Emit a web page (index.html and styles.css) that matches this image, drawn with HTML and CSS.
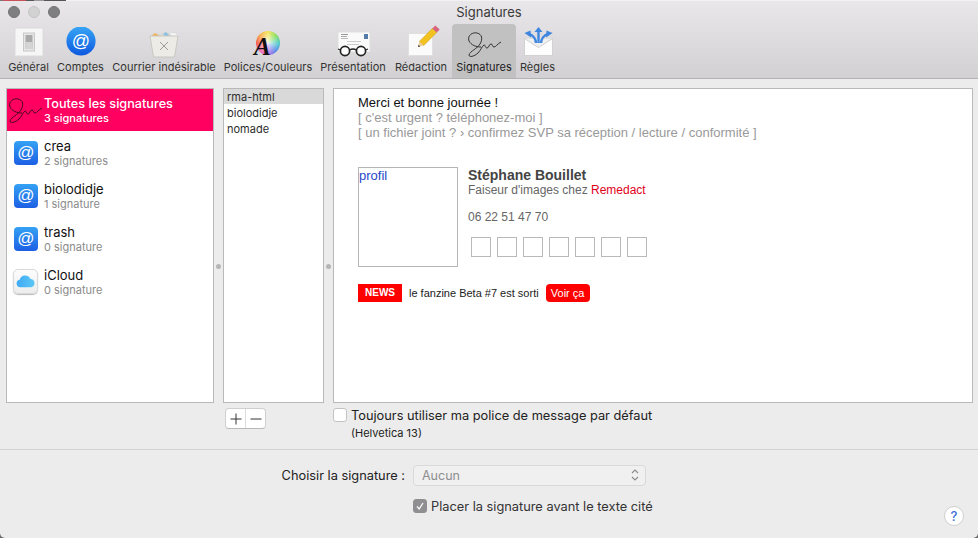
FILE: index.html
```html
<!DOCTYPE html>
<html lang="fr">
<head>
<meta charset="utf-8">
<title>Signatures</title>
<link rel="stylesheet" href="styles.css">
</head>
<body>
<div class="window">
  <header class="chrome">
    <i class="behind"></i>
    <div class="titlebar">
      <div class="lights"><i class="light"></i><i class="light light-off"></i><i class="light"></i></div>
      <div class="title">Signatures</div>
    </div>
    <nav class="tabs">
      <div class="tab">
        <svg class="ticon" viewBox="0 0 36 34"><rect x="4" y="1" width="28" height="28" fill="#f6f6f6" stroke="#dcdcdc"/><rect x="12.500" y="6" width="11" height="18" fill="#e6e6e6" stroke="#c8c8c8"/><rect x="14.500" y="8" width="7" height="14" fill="#a9a9a9"/><rect x="14.500" y="15" width="7" height="7" fill="#d4d4d4"/></svg>
        <span>Général</span>
      </div>
      <div class="tab">
        <svg class="ticon" viewBox="0 0 36 34"><defs><linearGradient id="gb" x1="0" y1="0" x2="0" y2="1"><stop offset="0" stop-color="#37a6f5"/><stop offset="1" stop-color="#0e58e0"/></linearGradient></defs><circle cx="18" cy="14" r="14.600" fill="url(#gb)"/><text x="18" y="20" class="at" font-size="18">@</text></svg>
        <span>Comptes</span>
      </div>
      <div class="tab">
        <svg class="ticon" viewBox="0 0 36 34"><path d="M5 9l4-3 5 1 5-2 5 1 5-1 3 4-4 3H8z" fill="#d9d9d9"/><path d="M5 9l4-3 5 3z" fill="#f0b45a"/><path d="M17 7l3-2 3 3-3 2z" fill="#8cc0e0"/><path d="M24 6l5 0 3 3-6 1z" fill="#f4f4f4"/><path d="M4 9h28l-3.500 21h-21z" fill="#ecebe6" stroke="#c9c8c2"/><path d="M14 15l8 8m0-8l-8 8" stroke="#9b9b9b" stroke-width="1" fill="none"/></svg>
        <span>Courrier indésirable</span>
      </div>
      <div class="tab">
        <div class="ticon wheelbox"><div class="wheel"></div><span class="wheel-a">A</span></div>
        <span>Polices/Couleurs</span>
      </div>
      <div class="tab">
        <svg class="ticon" viewBox="0 0 36 34"><rect x="3" y="5" width="32" height="20" fill="#fafafa" stroke="#dedede"/><rect x="6" y="7" width="7" height="1" fill="#999"/><rect x="6" y="9" width="6" height="1" fill="#aaa"/><rect x="6" y="11" width="7" height="1" fill="#bbb"/><rect x="29" y="7" width="4" height="5" fill="#557ca8"/><rect x="12" y="14" width="14" height="1" fill="#ccc"/><rect x="12" y="17" width="12" height="1" fill="#ccc"/><circle cx="10" cy="24" r="4.600" fill="#fff" stroke="#222" stroke-width="1.700"/><circle cx="26" cy="24" r="4.600" fill="#fff" stroke="#222" stroke-width="1.700"/><path d="M14.500 23q3.500-2 7 0M5.500 23l-2.500-1M30.500 23l2.500-1" stroke="#222" stroke-width="1.300" fill="none"/></svg>
        <span>Présentation</span>
      </div>
      <div class="tab">
        <svg class="ticon ticon-free" viewBox="0 0 36 34"><rect x="5.500" y="6.500" width="24" height="22" fill="#fbfbfb" stroke="#e0e0e0"/><path d="M16.300 14.400L29.300 1.400 33.700 5.600 20.700 18.600z" fill="#f2c21e" stroke="#c89512" stroke-width=".5"/><path d="M15 20l1.300-5.600 4.400 4.200z" fill="#efcfa0"/><path d="M15 20l.5-2.200 1.700 1.600z" fill="#333"/><path d="M29.300 1.400L32.300-1.600 36.700 2.600 33.700 5.600z" fill="#d8657e"/></svg>
        <span>Rédaction</span>
      </div>
      <div class="tab tab-active">
        <svg class="ticon" viewBox="0 0 36 34"><path d="M3 14C1 8 7 5 11 6 16 7 17 12 14 17 11 22 4 24 3 28 3 31 9 29 12 26 15 23 16 19 18 18 19 17 19 21 21 21 23 21 23 17 25 17 27 17 26 20 28 20 30 20 31 17 35 15M3 14C5 18 10 20 15 20" fill="none" stroke="#333" stroke-width="1"/></svg>
        <span>Signatures</span>
      </div>
      <div class="tab">
        <svg class="ticon" viewBox="0 0 36 34"><rect x="4.500" y="11.500" width="28" height="17" fill="#fdfdfd" stroke="#d2d2d2"/><path d="M4.500 11.500l14 9 14-9" fill="#f0f0f0" stroke="#cfcfcf"/><path d="M18.500 16V4M16 16c0-4-3-8-7-9M21 16c0-4 3-8 7-9" fill="none" stroke="#3f86e0" stroke-width="2.400"/><path d="M18.500 0l4 5h-8zM4.500 6l6-2.500 .5 7zM32.500 6l-6-2.500-.5 7z" fill="#3f86e0"/></svg>
        <span>Règles</span>
      </div>
    </nav>
  </header>

  <main class="body">
    <section class="panes">
      <div class="pane accounts">
        <div class="account account-sel">
          <svg class="sig-icon" viewBox="0 0 36 34"><path d="M3 14C1 8 7 5 11 6 16 7 17 12 14 17 11 22 4 24 3 28 3 31 9 29 12 26 15 23 16 19 18 18 19 17 19 21 21 21 23 21 23 17 25 17 27 17 26 20 28 20 30 20 31 17 35 15M3 14C5 18 10 20 15 20" fill="none" stroke="#4a0820" stroke-width="1"/></svg>
          <div class="acc-text"><div class="acc-name sel-name">Toutes les signatures</div><div class="acc-sub sel-sub">3 signatures</div></div>
        </div>
        <div class="account">
          <div class="mail-icon">@</div>
          <div class="acc-text"><div class="acc-name">crea</div><div class="acc-sub">2 signatures</div></div>
        </div>
        <div class="account">
          <div class="mail-icon">@</div>
          <div class="acc-text"><div class="acc-name">biolodidje</div><div class="acc-sub">1 signature</div></div>
        </div>
        <div class="account">
          <div class="mail-icon">@</div>
          <div class="acc-text"><div class="acc-name">trash</div><div class="acc-sub">0 signature</div></div>
        </div>
        <div class="account">
          <div class="cloud-icon"><svg viewBox="0 0 24 24" class="cloud"><defs><linearGradient id="gc" x1="0" y1="0" x2="1" y2="0"><stop offset="0" stop-color="#3fa9f5"/><stop offset="1" stop-color="#5cc8f5"/></linearGradient></defs><path d="M6.500 18a4 4 0 0 1-.6-7.900 6 6 0 0 1 11.300-.6 4.300 4.300 0 0 1 .8 8.500z" fill="url(#gc)"/></svg></div>
          <div class="acc-text"><div class="acc-name">iCloud</div><div class="acc-sub">0 signature</div></div>
        </div>
      </div>
      <div class="split"><i class="dot"></i></div>
      <div class="list-col">
        <div class="pane siglist">
          <div class="sigrow sigrow-sel">rma-html</div>
          <div class="sigrow">biolodidje</div>
          <div class="sigrow">nomade</div>
        </div>
        <div class="plusminus"><span class="pm">
          <svg viewBox="0 0 12 12" class="pm-icon"><path d="M6 .5v11M.5 6h11" stroke="#333" stroke-width="1" fill="none"/></svg></span><span class="pm pm-last"><svg viewBox="0 0 12 12" class="pm-icon"><path d="M.5 6h11" stroke="#333" stroke-width="1" fill="none"/></svg></span></div>
      </div>
      <div class="split"><i class="dot"></i></div>
      <div class="edit-col">
        <div class="pane editor">
          <p class="line line-black">Merci et bonne journée !</p>
          <p class="line line-grey">[ c'est urgent ? téléphonez-moi ]</p>
          <p class="line line-grey">[ un fichier joint ? › confirmez SVP sa réception / lecture / conformité ]</p>
          <div class="card">
            <div class="photo">profil</div>
            <div class="who">
              <div class="who-name">Stéphane Bouillet</div>
              <div class="who-job">Faiseur d'images chez <span class="red">Remedact</span></div>
              <div class="who-tel">06 22 51 47 70</div>
              <div class="socials"><i></i><i></i><i></i><i></i><i></i><i></i><i></i></div>
            </div>
          </div>
          <div class="news"><span class="news-tag">NEWS</span><span class="news-text">le fanzine Beta #7 est sorti</span><span class="news-btn">Voir ça</span></div>
        </div>
        <div class="font-opt">
          <label class="check-row"><i class="box"></i><span>Toujours utiliser ma police de message par défaut</span></label>
          <div class="font-name">(Helvetica 13)</div>
        </div>
      </div>
    </section>

    <section class="foot">
      <div class="foot-row">
        <div class="foot-label">Choisir la signature :</div>
        <div class="select"><span>Aucun</span>
          <svg viewBox="0 0 8 14" class="updown"><path d="M1 5l3-3 3 3M1 9l3 3 3-3" fill="none" stroke="#8a8a8a" stroke-width="1.100"/></svg>
        </div>
      </div>
      <div class="foot-row foot-row2">
        <div class="foot-label"></div>
        <label class="check-row2"><i class="box box-on"><svg viewBox="0 0 14 14"><path d="M3.500 7.500l2.500 3 4.500-7" fill="none" stroke="#fff" stroke-width="1.500"/></svg></i><span>Placer la signature avant le texte cité</span></label>
      </div>
      <div class="help">?</div>
    </section>
  </main>
</div>
</body>
</html>
```
FILE: styles.css
```css
* { box-sizing: border-box; }
html, body { margin: 0; padding: 0; }
html { background: #6a6a6a; }
body {
  width: 978px; height: 538px; overflow: hidden;
  font-family: "Inter", "Liberation Sans", sans-serif;
  color: #222;
}
.window { width: 978px; height: 538px; display: flex; flex-direction: column; background: #ececec; border-radius: 0 0 5px 5px; }

.chrome {
  height: 79px; flex: none; position: relative;
  background: linear-gradient(#e9e7e9, #d2d0d2);
  border-bottom: 1px solid #b3b3b3;
  border-top: 1px solid #f3f2f3;
}
.behind {
  position: absolute; left: 0; top: -1px; width: 66px; height: 1px;
  background: linear-gradient(90deg, #777 0 3px, #c8505a 3px 26px, #555 26px 34px, #999 34px 44px, #555 44px 66px);
}
.titlebar { height: 22px; display: flex; align-items: center; position: relative; padding-left: 8px; }
.lights { display: flex; gap: 8px; }
.light { width: 12px; height: 12px; border-radius: 50%; background: #7f7e80; border: 1px solid #737274; }
.light-off { background: #d3d2d3; border-color: #c6c5c6; }
.title { position: absolute; left: 0; right: 0; text-align: center; font-size: 13px; color: #3a3a3a; }

.tabs {
  display: grid; height: 55px;
  grid-template-columns: 49px 55px 112px 96px 74px 62px 64px 43px;
  padding-left: 4px;
}
.tab {
  display: flex; flex-direction: column; align-items: center;
  font-size: 11px; letter-spacing: .03px; color: #333; white-space: nowrap;
  border-radius: 4px 4px 0 0;
}
.tab span { line-height: 13px; }
.tab-active { background: #c2c1c2; color: #1c1c1c; margin-top: 1px; }
.ticon { width: 36px; height: 34px; margin-top: 4px; display: block; flex: none; }
.ticon-free { overflow: visible; }
.tab-active .ticon { margin-top: 3px; }
.at { fill: #fff; text-anchor: middle; font-family: "Liberation Sans", sans-serif; }
.wheelbox { position: relative; }
.wheel {
  position: absolute; left: 6px; top: 4px; width: 24px; height: 24px; border-radius: 50%;
  background:
    radial-gradient(circle, rgba(255,255,255,.85) 0, rgba(255,255,255,0) 75%),
    conic-gradient(#f5e14c, #7fdc4a, #3fc7c2, #4a7ee8, #b05ce0, #ff5fa8, #f4503f, #f5a63c, #f5e14c);
}
.tab .wheel-a {
  position: absolute; left: 4px; top: 7px;
  font-family: "Liberation Serif", serif; font-style: italic; font-weight: 700;
  font-size: 25px; line-height: 25px; color: #111;
}

.body { flex: 1; display: flex; flex-direction: column; }
.panes { display: flex; height: 371px; padding: 9px 5px 0 6px; border-bottom: 1px solid #d2d2d2; }
.pane { background: #fff; border: 1px solid #b9b9b9; height: 315px; }
.accounts { width: 208px; flex: none; }
.split { width: 9px; flex: none; display: flex; justify-content: center; padding-top: 176px; }
.dot { width: 5px; height: 5px; border-radius: 50%; background: #b6b6b6; }
.list-col { width: 101px; flex: none; }
.edit-col { flex: 1; }

.account { height: 43px; display: flex; align-items: center; gap: 6px; padding-left: 7px; }
.account-sel { background: #ff0060; height: 42px; padding-left: 0; gap: 1px; }
.sig-icon { width: 36px; height: 34px; flex: none; display: block; }
.acc-text { padding-top: 1px; }
.acc-name { font-size: 13px; line-height: 15px; color: #111; }
.acc-sub { font-size: 11px; line-height: 14px; color: #8b8b8b; }
.sel-name { color: #fff; font-weight: 500; font-size: 12.700px; }
.sel-sub { color: #fff; font-weight: 500; }
.mail-icon {
  width: 24px; height: 24px; border-radius: 4px; flex: none;
  background: linear-gradient(#34a2f4, #1c5fe4);
  color: #fff; font: 17px/23px "Liberation Sans", sans-serif; text-align: center;
}
.cloud-icon {
  width: 25px; height: 25px; border-radius: 5px; flex: none; margin-left: -1px;
  background: linear-gradient(#fcfcfc, #ededed); border: 1px solid #d9d9d9; box-shadow: 0 1px 1px #bbb;
}
.cloud { width: 23px; height: 23px; display: block; }

.sigrow { height: 16px; line-height: 16px; padding: 1px 0 0 3px; font-size: 11px; color: #2d2d2d; }
.sigrow-sel { background: #d9d9d9; height: 15px; padding-top: 0; }

.plusminus {
  display: inline-flex; margin: 5px 0 0 2px; height: 21px;
  background: #fff; border: 1px solid #cfcfcf; border-bottom-color: #b9b9b9; border-radius: 4px;
}
.pm { width: 20px; display: flex; align-items: center; justify-content: center; border-right: 1px solid #dcdcdc; }
.pm-last { width: 19px; border-right: 0; }
.pm-icon { width: 12px; height: 12px; display: block; }

.editor { padding: 6px 0 0 24px; font-family: "Liberation Sans", sans-serif; }
.line { margin: 0; font-size: 13px; line-height: 15px; }
.line-black { color: #111; }
.line-grey { color: #999; }
.card { display: flex; margin-top: 27px; }
.photo { width: 100px; height: 100px; border: 1px solid #b5b5b5; color: #2747c8; font-size: 13px; line-height: 15px; padding: 0; }
.who { margin-left: 10px; color: #666; }
.who-name { font-size: 14px; font-weight: 700; line-height: 16px; color: #444; }
.who-job { font-size: 12px; line-height: 14px; }
.red { color: #e0001b; }
.who-tel { font-size: 12px; line-height: 14px; margin-top: 13px; }
.socials { display: flex; gap: 6px; margin: 13px 0 0 3px; }
.socials i { width: 20px; height: 20px; border: 1px solid #b9b9b9; display: block; }
.news { display: flex; align-items: center; margin-top: 17px; height: 18px; font-size: 11px; }
.news-tag { width: 44px; height: 18px; background: #fe0000; color: #fff; text-align: center; line-height: 18px; font-weight: 700; font-size: 10px; }
.news-text { margin-left: 7px; color: #222; }
.news-btn { margin-left: 7px; width: 44px; height: 18px; background: #fe0000; color: #fff; text-align: center; line-height: 18px; border-radius: 4px; }

.font-opt { padding-top: 4px; }
.check-row { display: flex; align-items: center; gap: 4px; font-size: 12.800px; color: #222; height: 16px; }
.box { width: 14px; height: 14px; background: #fff; border: 1px solid #c2c2c2; border-radius: 3px; flex: none; display: block; }
.box-on { background: #8f8e90; border-color: #8f8e90; }
.box-on svg { width: 12px; height: 12px; display: block; }
.font-name { font-size: 11px; line-height: 14px; padding: 3px 0 0 18px; color: #222; }

.foot { flex: 1; position: relative; padding-top: 14px; }
.foot-row { display: flex; align-items: center; height: 22px; }
.foot-row2 { margin-top: 9px; }
.foot-label { width: 405px; text-align: right; font-size: 12.800px; color: #222; flex: none; }
.select {
  width: 233px; height: 21px; margin-left: 8px; display: flex; align-items: center; justify-content: space-between;
  padding: 0 6px 0 8px; font-size: 12.500px; color: #8e8e8e;
  background: #f0f0f0; border: 1px solid #d9d9d9; border-radius: 4px;
}
.updown { width: 8px; height: 14px; display: block; }
.check-row2 { margin-left: 8px; display: flex; align-items: center; gap: 4px; font-size: 12.800px; color: #333; }
.help {
  position: absolute; left: 944px; top: 56px; width: 20px; height: 20px; border-radius: 50%;
  background: #fff; border: 1px solid #cfcfcf; color: #3a6fd8; text-align: center;
  font-size: 13px; line-height: 18px; font-weight: 500;
}
```
